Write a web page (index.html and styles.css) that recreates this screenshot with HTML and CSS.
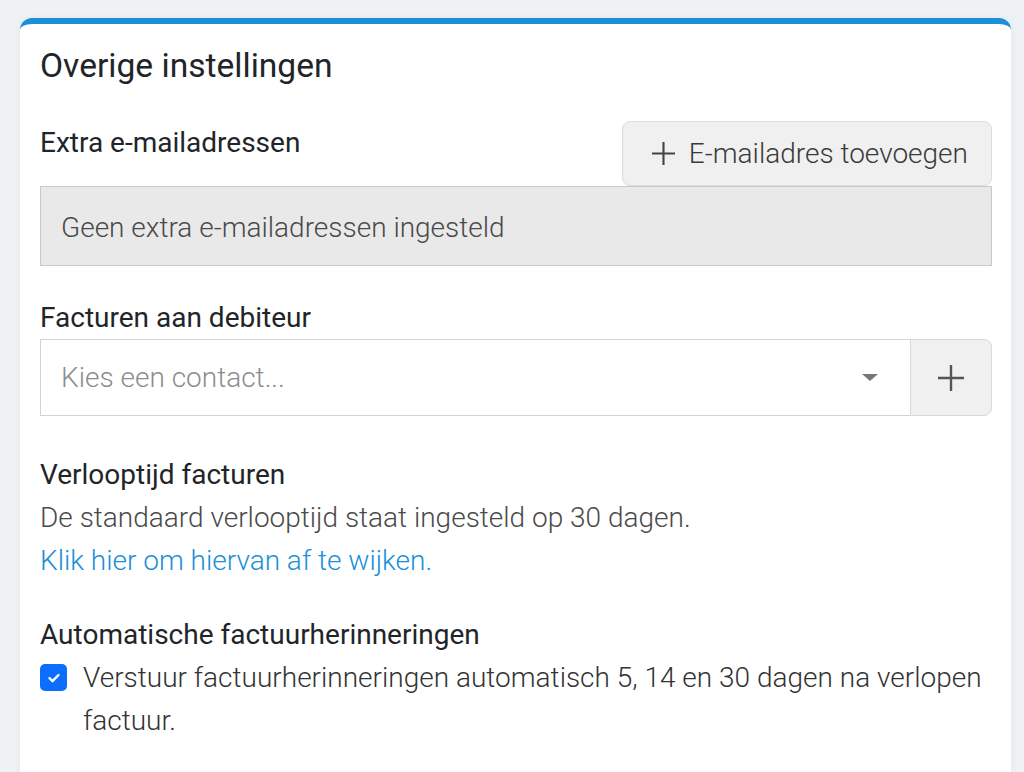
FILE: index.html
```html
<!DOCTYPE html>
<html lang="nl">
<head>
  <meta charset="UTF-8" />
  <meta name="viewport" content="width=device-width, initial-scale=1.0"/>
  <title>Overige instellingen</title>
  <link rel="stylesheet" href="styles.css">
</head>
<body>
  <div class="card">
    <h2 class="card-title">Overige instellingen</h2>

    <div class="field-head">
      <span class="label">Extra e-mailadressen</span>
      <button class="btn-light">
        <svg class="plus" viewBox="0 0 24 24" width="23" height="23"><path d="M12 0v24M0 12h24"/></svg>
        E-mailadres toevoegen
      </button>
    </div>
    <div class="empty-box">Geen extra e-mailadressen ingesteld</div>

    <div class="field">
      <div class="label">Facturen aan debiteur</div>
      <div class="input-group">
        <div class="select">
          <span class="placeholder">Kies een contact...</span>
          <span class="caret"></span>
        </div>
        <button class="addon">
          <svg class="plus" viewBox="0 0 24 24" width="26" height="26"><path d="M12 0v24M0 12h24"/></svg>
        </button>
      </div>
    </div>

    <div class="field">
      <div class="label">Verlooptijd facturen</div>
      <div class="text">De standaard verlooptijd staat ingesteld op 30 dagen.</div>
      <a class="link" href="#">Klik hier om hiervan af te wijken.</a>
    </div>

    <div class="field last">
      <div class="label">Automatische factuurherinneringen</div>
      <label class="check">
        <span class="box">
          <svg viewBox="0 0 16 16" width="16" height="16"><path d="M3.5 8.2l3 3 6-6.2"/></svg>
        </span>
        <span class="check-text">Verstuur factuurherinneringen automatisch 5, 14 en 30 dagen na verlopen factuur.</span>
      </label>
    </div>
  </div>
</body>
</html>
```

FILE: styles.css
```css
body {
  font-family: Roboto, 'Noto Sans', sans-serif;
  background-color: #eef2f5;
  color: #212529;
  margin: 0;
  padding: 18px 13px 0 20px;
}

.card {
  background: #ffffff;
  border-top: 6px solid #1b8fd9;
  border-radius: 12px 12px 0 0;
  box-shadow: 0 0 6px rgba(0, 0, 0, 0.06);
  padding: 22px 19px 40px 20px;
  min-height: 720px;
}

.card-title {
  font-size: 33.6px;
  font-weight: 400;
  line-height: 40px;
  margin: 0 0 35px;
}

.label {
  font-size: 28px;
  line-height: 43px;
  color: #212529;
}

.field-head {
  display: flex;
  justify-content: space-between;
  align-items: flex-start;
}

.btn-light {
  display: flex;
  align-items: center;
  gap: 14px;
  height: 65px;
  padding: 0 23px 0 29px;
  background: #f0f0f0;
  border: 1px solid #dcdcdc;
  border-radius: 8px;
  font-family: inherit;
  font-size: 28px;
  font-weight: 300;
  color: #3a3a3a;
}

.plus path {
  stroke: #444;
  stroke-width: 2.2;
  fill: none;
}

.empty-box {
  display: flex;
  align-items: center;
  height: 76px;
  padding: 2px 20px 0;
  background: #e9e9e9;
  border: 1px solid #c9c9c9;
  font-size: 28px;
  font-weight: 300;
  color: #4a4a4a;
}

.field {
  margin-top: 30px;
}

.field + .field {
  margin-top: 37px;
}

.field.last {
  margin-top: 31px;
}

.input-group {
  display: flex;
  height: 77px;
}

.select {
  flex: 1;
  display: flex;
  align-items: center;
  justify-content: space-between;
  padding: 0 32px 0 20px;
  border: 1px solid #d0d3dc;
  border-right: none;
}

.placeholder {
  font-size: 28px;
  font-weight: 300;
  color: #8d8d8d;
}

.caret {
  width: 0;
  height: 0;
  border-left: 8px solid transparent;
  border-right: 8px solid transparent;
  border-top: 7px solid #777;
}

.addon {
  width: 82px;
  display: flex;
  align-items: center;
  justify-content: center;
  background: #f0f0f0;
  border: 1px solid #d8d8d8;
  border-radius: 0 8px 8px 0;
}

.addon .plus path {
  stroke: #555;
}

.text {
  font-size: 28px;
  font-weight: 300;
  line-height: 43px;
  color: #4a4a4a;
}

.link {
  display: block;
  font-size: 28px;
  font-weight: 300;
  line-height: 43px;
  color: #1b8fd9;
  text-decoration: none;
}

.check {
  display: flex;
  align-items: flex-start;
  gap: 16px;
}

.box {
  flex: none;
  width: 27px;
  height: 27px;
  margin-top: 8px;
  border-radius: 5px;
  background: #0d6efd;
  display: flex;
  align-items: center;
  justify-content: center;
}

.box path {
  stroke: #fff;
  stroke-width: 2.4;
  stroke-linecap: round;
  stroke-linejoin: round;
  fill: none;
}

.check-text {
  font-size: 28px;
  font-weight: 300;
  line-height: 43px;
  color: #333;
}
```
